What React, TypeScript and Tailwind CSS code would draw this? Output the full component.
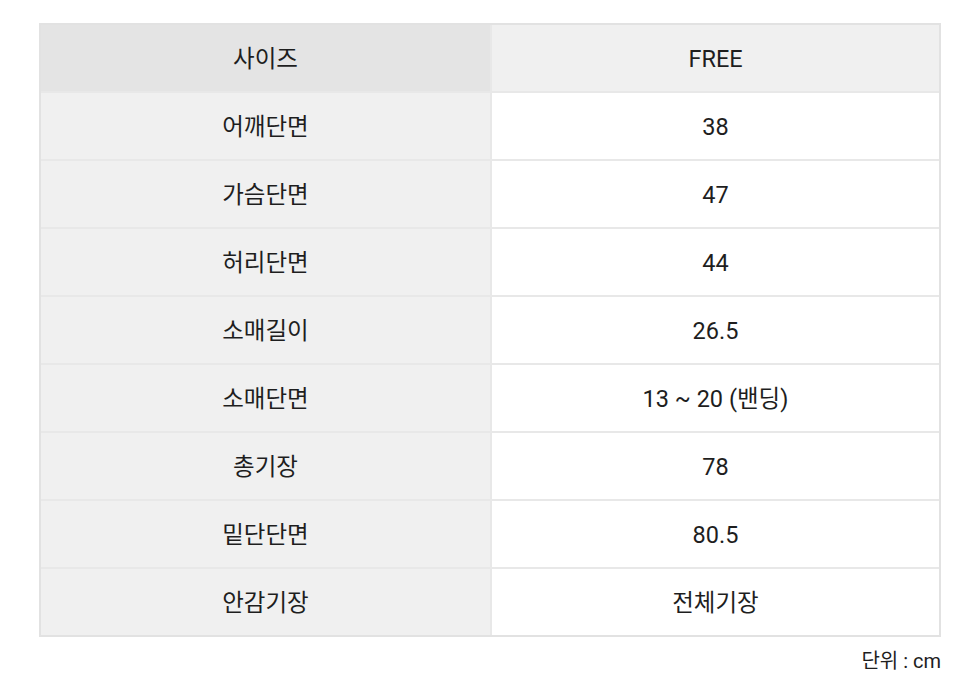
const rows = [
  ['어깨단면', '38'],
  ['가슴단면', '47'],
  ['허리단면', '44'],
  ['소매길이', '26.5'],
  ['소매단면', '13 ~ 20 (밴딩)'],
  ['총기장', '78'],
  ['밑단단면', '80.5'],
  ['안감기장', '전체기장'],
]

export default function App() {
  return (
    <div
      className="min-h-screen bg-white px-[39px] pt-[23px] text-[#1e1e1e]"
      style={{ fontFamily: 'Roboto, "Noto Sans CJK KR", sans-serif' }}
    >
      <div className="border-2 border-[#e2e2e2]">
        <div className="grid grid-cols-2 text-[23.5px]">
          <div className="flex h-[66px] items-center justify-center bg-[#e4e4e4] pt-[3px]">사이즈</div>
          <div className="flex h-[66px] items-center justify-center border-l-2 border-[#e8e8e8] bg-[#f0f0f0] pt-[3px]">
            FREE
          </div>
        </div>
        {rows.map(([label, value]) => (
          <div key={label} className="grid grid-cols-2 border-t-2 border-[#e8e8e8] text-[23.5px]">
            <div className="flex h-[66px] items-center justify-center bg-[#f0f0f0] pt-[3px]">{label}</div>
            <div className="flex h-[66px] items-center justify-center border-l-2 border-[#e8e8e8] bg-white pt-[3px]">
              {value}
            </div>
          </div>
        ))}
      </div>
      <p className="mt-[9px] text-right text-[20px]">단위 : cm</p>
    </div>
  )
}
